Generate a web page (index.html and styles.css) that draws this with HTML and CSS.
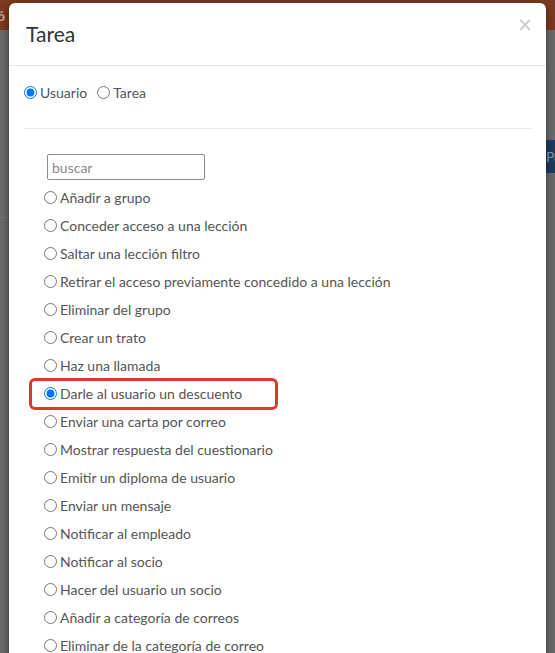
FILE: index.html
```html
<!DOCTYPE html>
<html lang="es">
<head>
<meta charset="utf-8">
<title>Tarea</title>
<link rel="stylesheet" href="styles.css">
</head>
<body>
<div class="page">
  <div class="topbar"><span class="topbar-text">ó</span></div>
  <div class="page-row">
    <button class="page-btn">Po</button>
  </div>
  <div class="page-line"></div>
</div>

<div class="backdrop">
  <div class="modal">
    <div class="modal-header">
      <h4 class="modal-title">Tarea</h4>
      <span class="close">×</span>
    </div>
    <div class="modal-body">
      <div class="mode-row">
        <label class="mode"><input type="radio" name="mode" checked>Usuario</label>
        <label class="mode"><input type="radio" name="mode">Tarea</label>
      </div>
      <hr class="sep">
      <div class="tasks">
        <input class="search" type="text" placeholder="buscar">
        <label class="task"><input type="radio" name="task">Añadir a grupo</label>
        <label class="task"><input type="radio" name="task">Conceder acceso a una lección</label>
        <label class="task"><input type="radio" name="task">Saltar una lección filtro</label>
        <label class="task"><input type="radio" name="task">Retirar el acceso previamente concedido a una lección</label>
        <label class="task"><input type="radio" name="task">Eliminar del grupo</label>
        <label class="task"><input type="radio" name="task">Crear un trato</label>
        <label class="task"><input type="radio" name="task">Haz una llamada</label>
        <label class="task highlighted"><input type="radio" name="task" checked>Darle al usuario un descuento<span class="mark"></span></label>
        <label class="task"><input type="radio" name="task">Enviar una carta por correo</label>
        <label class="task"><input type="radio" name="task">Mostrar respuesta del cuestionario</label>
        <label class="task"><input type="radio" name="task">Emitir un diploma de usuario</label>
        <label class="task"><input type="radio" name="task">Enviar un mensaje</label>
        <label class="task"><input type="radio" name="task">Notificar al empleado</label>
        <label class="task"><input type="radio" name="task">Notificar al socio</label>
        <label class="task"><input type="radio" name="task">Hacer del usuario un socio</label>
        <label class="task"><input type="radio" name="task">Añadir a categoría de correos</label>
        <label class="task"><input type="radio" name="task">Eliminar de la categoría de correo</label>
      </div>
    </div>
  </div>
</div>
</body>
</html>
```

FILE: styles.css
```css
* { box-sizing: border-box; }
html, body { margin: 0; padding: 0; }
body {
  width: 555px;
  height: 653px;
  overflow: hidden;
  background: #6b6b6b;
  font-family: Lato, "Open Sans", sans-serif;
  position: relative;
}
.page { height: 653px; }
.topbar {
  height: 30px;
  background: #7c3a1f;
  display: flex;
  align-items: center;
}
.topbar-text {
  margin-left: -3px;
  color: #c8aaa0;
  font-size: 14px;
  font-weight: 700;
}
.page-row {
  display: flex;
  justify-content: flex-end;
  padding-top: 110px;
}
.page-btn {
  width: 30px;
  height: 33px;
  margin-right: -21px;
  border: none;
  background: #1d3c5c;
  color: #8ea0b4;
  font-family: Lato, sans-serif;
  font-size: 14px;
  text-align: left;
  padding: 0 0 0 0;
}
.page-line {
  margin-top: 44px;
  height: 1px;
  background: #747474;
  width: 9px;
}
.backdrop {
  position: absolute;
  inset: 0;
  padding: 3px 9px 0 9px;
}
.modal {
  width: 537px;
  height: 700px;
  background: #fff;
  border-radius: 6px 6px 0 0;
  box-shadow: 0 3px 9px rgba(0,0,0,.5);
}
.modal-header {
  height: 63px;
  border-bottom: 1px solid #e5e5e5;
  display: flex;
  align-items: center;
  justify-content: space-between;
  padding: 0 13px 0 17px;
}
.modal-title {
  margin: 0;
  margin-top: -2px;
  font-size: 21px;
  font-weight: 400;
  color: #333;
}
.close {
  align-self: flex-start;
  margin-top: 11px;
  color: #c8c8c8;
  font-size: 19px;
  line-height: 20px;
  font-family: "DejaVu Sans", sans-serif;
}
.modal-body {
  padding: 16px 15px 0 15px;
}
.mode-row {
  display: flex;
  gap: 10px;
  height: 20px;
  align-items: center;
}
.mode, .task {
  display: flex;
  align-items: center;
  font-size: 14px;
  color: #555;
}
input[type="radio"] {
  width: 13px;
  height: 13px;
  margin: 0 3px 0 0;
}
.sep {
  margin: 26px 0 0 0;
  border: none;
  border-top: 1px solid #e8e8e8;
}
.tasks {
  padding: 25px 0 0 20px;
  display: flex;
  flex-direction: column;
  align-items: flex-start;
}
.search {
  width: 158px;
  height: 26px;
  margin: 0 0 3px 3px;
  border: 1px solid #8a8a8a;
  border-radius: 2px;
  padding: 0 4px;
  font-family: Lato, sans-serif;
  font-size: 14px;
  color: #555;
}
.search::placeholder { color: #8a8a8a; }
.task {
  height: 28px;
  position: relative;
}
.mark {
  position: absolute;
  left: -15px;
  top: -1px;
  width: 249px;
  height: 32px;
  border: 3px solid #e2352c;
  border-radius: 6px;
}
```
